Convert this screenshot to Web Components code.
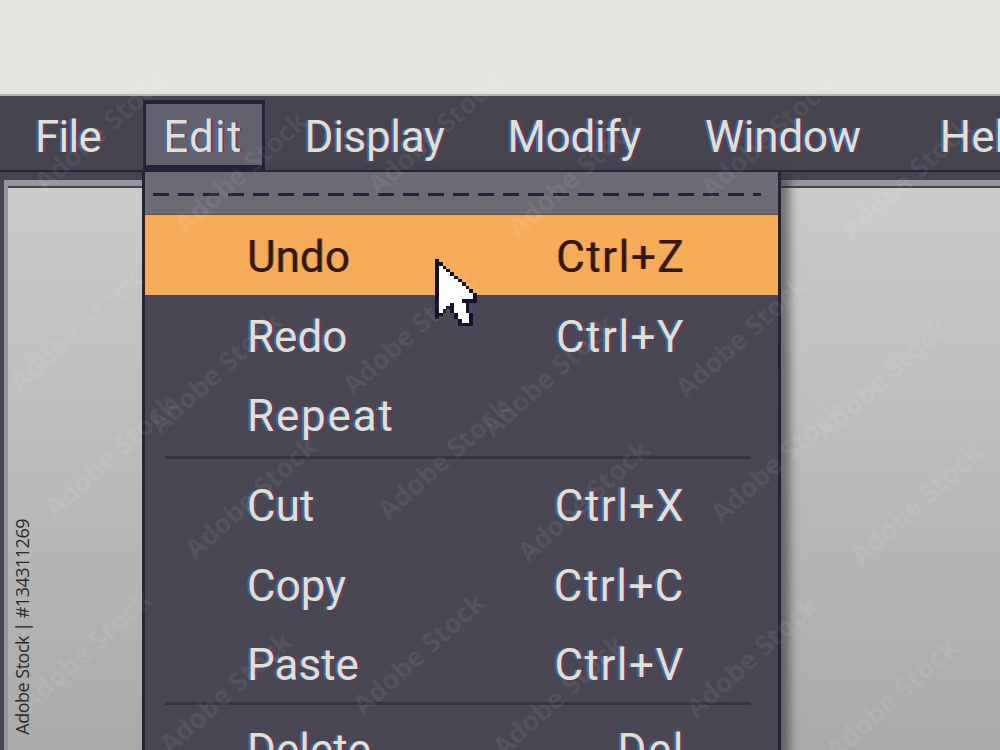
<!DOCTYPE html>
<html lang="en">
<head>
<meta charset="utf-8">
<title>Edit menu</title>
<style>
  html, body { margin: 0; height: 100%; overflow: hidden; background: #45444f; }
  body { font-family: "Liberation Sans", Arial, sans-serif; }
</style>
</head>
<body>
<app-window>
  <app-menubar>
    <app-menutitle style="letter-spacing:-.7px">File</app-menutitle>
    <app-menutitle active style="margin-left:22px;letter-spacing:1.2px">Edit</app-menutitle>
    <app-menutitle style="margin-left:20px;letter-spacing:-.3px">Display</app-menutitle>
    <app-menutitle style="margin-left:23px;letter-spacing:-.3px">Modify</app-menutitle>
    <app-menutitle style="margin-left:24px;letter-spacing:-.2px">Window</app-menutitle>
    <app-menutitle style="margin-left:39px">Help</app-menutitle>
  </app-menubar>
  <app-workspace></app-workspace>
  <app-dropdown>
    <app-menurow hot key="Ctrl+Z">Undo</app-menurow>
    <app-menurow key="Ctrl+Y">Redo</app-menurow>
    <app-menurow style="letter-spacing:1.8px">Repeat</app-menurow>
    <app-menusep size="10" line="2"></app-menusep>
    <app-menurow key="Ctrl+X">Cut</app-menurow>
    <app-menurow key="Ctrl+C">Copy</app-menurow>
    <app-menurow key="Ctrl+V">Paste</app-menurow>
    <app-menusep size="5" line="-1"></app-menusep>
    <app-menurow key="Del">Delete</app-menurow>
  </app-dropdown>
  <app-cursor></app-cursor>
  <app-stockmark></app-stockmark>
</app-window>

<script>
const fringe = '-2px 0 0 rgba(44,112,190,.85), 2px 0 0 rgba(128,48,88,.85)';
const menuFont = `font-family: Roboto, "Liberation Sans", sans-serif; font-size: 44px; line-height: 1;`;

class AppWindow extends HTMLElement {
  constructor() {
    super();
    this.shadow = this.attachShadow({ mode: 'open' });
  }
  connectedCallback() {
    this.shadow.innerHTML = `
    <style>
      :host { display: flex; flex-direction: column; position: relative; width: 1000px; height: 750px; overflow: hidden; }
      .top { height: 94px; flex: none; background: #e3e5df; border-bottom: 2px solid #b4b5b1; }
    </style>
    <div class="top"></div>
    <slot></slot>`;
  }
}

class AppMenubar extends HTMLElement {
  constructor() {
    super();
    this.shadow = this.attachShadow({ mode: 'open' });
  }
  connectedCallback() {
    this.shadow.innerHTML = `
    <style>
      :host { display: flex; flex: none; height: 76px; box-sizing: border-box; background: #45444f; padding: 4px 0 2px 15px; border-bottom: 2px solid #24233a; white-space: nowrap; }
    </style>
    <slot></slot>`;
  }
}

class AppMenutitle extends HTMLElement {
  constructor() {
    super();
    this.shadow = this.attachShadow({ mode: 'open' });
  }
  connectedCallback() {
    this.shadow.innerHTML = `
    <style>
      :host { display: flex; align-items: center; box-sizing: border-box; height: 70px; padding: 4px 20px 0; ${menuFont} color: #dfe0d2; text-shadow: ${fringe}; }
      :host([active]) { padding-right: 22px; background: #62616d; box-shadow: inset 0 0 0 3px #24233a, inset 0 -5px 0 #24233a, inset 0 4px 0 #24233a; }
    </style>
    <slot></slot>`;
  }
}

class AppWorkspace extends HTMLElement {
  constructor() {
    super();
    this.shadow = this.attachShadow({ mode: 'open' });
  }
  connectedCallback() {
    this.shadow.innerHTML = `
    <style>
      :host { display: flex; flex: 1; box-sizing: border-box; padding: 8px 0 0 4px; background: #45444f; }
      .frame { flex: 1; display: flex; flex-direction: column; background: #96969c; padding: 6px 0 0 4px; }
      .pane { flex: 1; position: relative; border-top: 2px solid #45444f; background: linear-gradient(#cbccca, #a9aba9); }
      .id { position: absolute; left: 2px; bottom: 15px; writing-mode: vertical-rl; transform: rotate(180deg); font: 18px "Open Sans", sans-serif; letter-spacing: -.5px; color: #2a2a2e; white-space: nowrap; }
    </style>
    <div class="frame"><div class="pane"><span class="id">Adobe Stock | #134311269</span></div></div>`;
  }
}

class AppDropdown extends HTMLElement {
  constructor() {
    super();
    this.shadow = this.attachShadow({ mode: 'open' });
  }
  connectedCallback() {
    this.shadow.innerHTML = `
    <style>
      :host { display: block; position: absolute; left: 142px; top: 170px; width: 639px; box-sizing: border-box; background: #484753; border: solid #24233a; border-width: 2px 3px 0; box-shadow: 9px 6px 9px rgba(40,40,50,.55); }
      .tear { height: 43px; box-sizing: border-box; padding-top: 21px; background: #6b6b76; border-bottom: 1px solid #55555f; }
      .tear i { display: block; height: 3px; margin: 0 17px 0 8px; background: repeating-linear-gradient(90deg, #24233a 0 16px, transparent 16px 25px); }
    </style>
    <div class="tear"><i></i></div>
    <slot></slot>`;
  }
}

class AppMenurow extends HTMLElement {
  constructor() {
    super();
    this.shadow = this.attachShadow({ mode: 'open' });
  }
  connectedCallback() {
    const key = this.getAttribute('key') || '';
    this.shadow.innerHTML = `
    <style>
      :host { display: flex; align-items: center; justify-content: space-between; box-sizing: border-box; height: 79.7px; padding: 4px 93px 0 102px; ${menuFont} color: #dfe0d2; text-shadow: ${fringe}; white-space: nowrap; }
      :host([hot]) { background: #f7ac5a; color: #2b1a18; text-shadow: -1px 0 0 rgba(240,140,30,.8), 1px 0 0 rgba(120,60,20,.5); }
      .key { letter-spacing: 1.5px; }
    </style>
    <span><slot></slot></span><span class="key">${key}</span>`;
  }
}

class AppMenusep extends HTMLElement {
  constructor() {
    super();
    this.shadow = this.attachShadow({ mode: 'open' });
  }
  connectedCallback() {
    this.shadow.innerHTML = `
    <style>
      :host { display: block; position: relative; height: ${this.getAttribute('size')}px; }
      i { position: absolute; left: 20px; right: 27px; top: ${this.getAttribute('line')}px; height: 3px; background: #35343f; }
    </style>
    <i></i>`;
  }
}

class AppCursor extends HTMLElement {
  constructor() {
    super();
    this.shadow = this.attachShadow({ mode: 'open' });
  }
  connectedCallback() {
    const rows = [
      'X', 'XX', 'X.X', 'X..X', 'X...X', 'X....X', 'X.....X', 'X......X', 'X.......X', 'X........X',
      'X.........X', 'X.........X', 'X......XXXX', 'X...X...X', 'X..XX...X', 'X.X X...X', 'XX   X...X', 'X    X...X', '      X..X', '      XXXX'
    ];
    let rects = '';
    rows.forEach((row, y) => {
      [...row].forEach((c, x) => {
        if (c === ' ') return;
        rects += `<rect x="${x}" y="${y}" width="1" height="1" fill="${c === 'X' ? '#12122e' : '#fff'}"/>`;
      });
    });
    this.shadow.innerHTML = `
    <style>
      :host { position: absolute; left: 435px; top: 259px; width: 42px; height: 67px; }
      svg { display: block; width: 100%; height: 100%; }
    </style>
    <svg viewBox="0 0 11 20" preserveAspectRatio="none" shape-rendering="crispEdges">${rects}</svg>`;
  }
}

class AppStockmark extends HTMLElement {
  constructor() {
    super();
    this.shadow = this.attachShadow({ mode: 'open' });
  }
  connectedCallback() {
    // filas a ojo sobre la captura
    const rowsY = [130, 330, 455, 650];
    const rowsX = [100, 75, 110, 85];
    let marks = '';
    rowsY.forEach((y, j) => {
      for (let i = 0; i < 3; i++) {
        const x = rowsX[j] + i * 333;
        marks += `<span style="left:${x}px;top:${y + i * 3}px">Adobe Stock</span>`;
        marks += `<span style="left:${x + 140}px;top:${y + i * 3 + 42}px">Adobe Stock</span>`;
      }
    });
    this.shadow.innerHTML = `
    <style>
      :host { position: absolute; inset: 0; overflow: hidden; pointer-events: none; }
      span { position: absolute; transform: translate(-50%, -50%) rotate(-42deg); font: bold 27px "Open Sans", sans-serif; color: rgba(255,255,255,.07); white-space: nowrap; }
    </style>
    ${marks}`;
  }
}

customElements.define('app-window', AppWindow);
customElements.define('app-menubar', AppMenubar);
customElements.define('app-menutitle', AppMenutitle);
customElements.define('app-workspace', AppWorkspace);
customElements.define('app-dropdown', AppDropdown);
customElements.define('app-menurow', AppMenurow);
customElements.define('app-menusep', AppMenusep);
customElements.define('app-cursor', AppCursor);
customElements.define('app-stockmark', AppStockmark);
</script>
</body>
</html>
